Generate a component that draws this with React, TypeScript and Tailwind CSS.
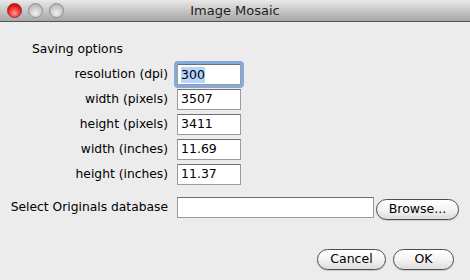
import React from "react";

const font = { fontFamily: '"DejaVu Sans", "Liberation Sans", sans-serif' };

function Field({ value, width, focused }: { value: string; width: string; focused?: boolean }) {
  return (
    <div
      className={`${width} h-[21px] bg-white border border-[#9b9b9b] border-t-[#6f6f6f] flex items-center pl-[3px] text-[12.5px] text-black ${
        focused ? "outline outline-[3px] outline-[#86a9d9] rounded-[1px]" : ""
      }`}
    >
      {focused ? <span className="bg-[#b5d5ff] leading-[16px]">{value}</span> : value}
    </div>
  );
}

function Button({ label, width }: { label: string; width: string }) {
  return (
    <button
      className={`${width} h-[21px] rounded-full border border-[#4d4d4d] bg-gradient-to-b from-white via-[#f4f4f4] to-[#dcdcdc] text-[12.5px] text-black leading-none flex items-center justify-center shadow-[0_1px_1px_rgba(0,0,0,0.15)]`}
    >
      {label}
    </button>
  );
}

export default function App() {
  const rows = [
    { label: "resolution (dpi)", value: "300", focused: true },
    { label: "width (pixels)", value: "3507" },
    { label: "height (pixels)", value: "3411" },
    { label: "width (inches)", value: "11.69" },
    { label: "height (inches)", value: "11.37" },
  ];

  return (
    <div className="w-[470px] h-[280px] bg-[#ececec] flex flex-col text-[12.3px] text-black" style={font}>
      {/* title bar */}
      <div className="h-[22px] bg-gradient-to-b from-[#e9e9e9] to-[#a7a7a7] border-b border-[#555] flex items-center relative">
        <div className="flex gap-[6px] pl-[7px]">
          <div className="w-[15px] h-[15px] rounded-full border border-[#9b2b2b] bg-[radial-gradient(circle_at_50%_70%,#ff9a9a,#e22_55%,#a00)]" />
          <div className="w-[15px] h-[15px] rounded-full border border-[#8e8e8e] bg-[radial-gradient(circle_at_50%_70%,#f0f0f0,#c4c4c4_60%,#a5a5a5)]" />
          <div className="w-[15px] h-[15px] rounded-full border border-[#8e8e8e] bg-[radial-gradient(circle_at_50%_70%,#f0f0f0,#c4c4c4_60%,#a5a5a5)]" />
        </div>
        <div className="absolute inset-0 flex items-center justify-center text-[13px] text-[#222]">Image Mosaic</div>
      </div>

      <div className="pl-[32px] pt-[19px] h-[35px] leading-[16px]">Saving options</div>

      <div className="mt-[7px] grid grid-cols-[168px_64px] gap-x-[9px] gap-y-[4px]">
        {rows.map((r) => (
          <React.Fragment key={r.label}>
            <div className="text-right h-[21px] leading-[21px]">{r.label}</div>
            <Field value={r.value} width="w-[64px]" focused={r.focused} />
          </React.Fragment>
        ))}
      </div>

      <div className="mt-[12px] flex items-start">
        <div className="w-[168px] text-right h-[21px] leading-[21px]">Select Originals database</div>
        <div className="ml-[9px]">
          <Field value="" width="w-[197px]" />
        </div>
        <div className="ml-[2px] mt-[2px]">
          <Button label="Browse..." width="w-[83px]" />
        </div>
      </div>

      <div className="mt-[29px] flex justify-end gap-[7px] pr-[16px]">
        <Button label="Cancel" width="w-[69px]" />
        <Button label="OK" width="w-[61px]" />
      </div>
    </div>
  );
}
